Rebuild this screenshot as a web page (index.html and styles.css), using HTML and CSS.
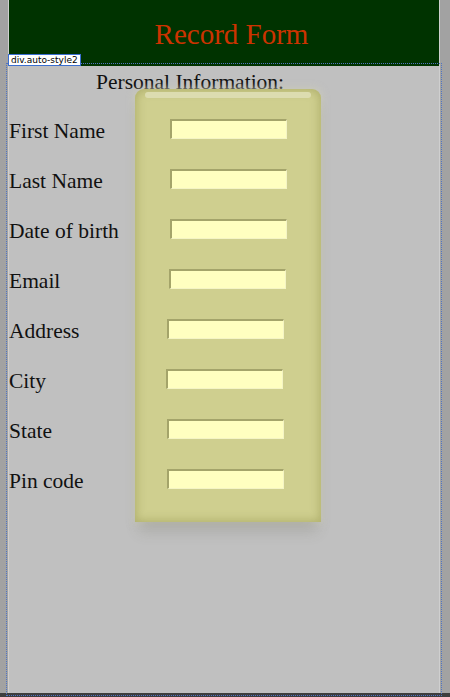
FILE: index.html
```html
<!DOCTYPE html>
<html lang="en">
<head>
    <meta charset="UTF-8">
    <meta name="viewport" content="width=device-width, initial-scale=1.0">
    <title>Record Form</title>
    <link rel="stylesheet" href="styles.css">
</head>
<body>
    <div class="page">
        <!-- Header -->
        <div class="header">
            <h1>Record Form</h1>
        </div>

        <!-- Form area (selected div in design view) -->
        <div class="auto-style2">
            <span class="tag-label">div.auto-style2</span>
            <div class="section-title">Personal Information:</div>

            <div class="form">
                <div class="labels">
                    <div class="row">First Name</div>
                    <div class="row">Last Name</div>
                    <div class="row">Date of birth</div>
                    <div class="row">Email</div>
                    <div class="row">Address</div>
                    <div class="row">City</div>
                    <div class="row">State</div>
                    <div class="row">Pin code</div>
                </div>
                <div class="panel">
                    <div class="row"><input type="text" class="field"></div>
                    <div class="row"><input type="text" class="field"></div>
                    <div class="row"><input type="text" class="field"></div>
                    <div class="row shift-1"><input type="text" class="field"></div>
                    <div class="row shift-3"><input type="text" class="field"></div>
                    <div class="row shift-4"><input type="text" class="field"></div>
                    <div class="row shift-3"><input type="text" class="field"></div>
                    <div class="row shift-3"><input type="text" class="field"></div>
                </div>
            </div>
        </div>
    </div>
    <div class="status-bar"></div>
</body>
</html>
```

FILE: styles.css
```css
html, body {
    margin: 0;
    padding: 0;
}
body {
    background-color: #a2a2a2;
    font-family: "Liberation Serif", "Times New Roman", serif;
    color: #111;
    height: 697px;
    overflow: hidden;
}
.page {
    margin-left: 8px;
    width: 430px;
    height: 693px;
    border-left: 1px solid #cfcfcf;
    border-right: 1px solid #cfcfcf;
    background-color: #c0c0c0;
    display: flex;
    flex-direction: column;
}
.header {
    background-color: #003300;
    height: 66px;
    display: flex;
    align-items: center;
    justify-content: center;
}
.header h1 {
    margin: 0;
    padding: 2px 0 0 15px;
    font-size: 29px;
    font-weight: normal;
    color: #cc3300;
}
.auto-style2 {
    position: relative;
    flex: 1;
    outline: 1px dotted #4f74c4;
    outline-offset: 2px;
}
.tag-label {
    position: absolute;
    top: -12px;
    left: -1px;
    height: 10px;
    padding: 0 2px;
    background-color: #fff;
    border: 1px solid #3b6fd0;
    font-family: "DejaVu Sans", sans-serif;
    font-size: 9px;
    line-height: 10px;
    color: #000;
}
.section-title {
    padding-left: 87px;
    margin-top: 4px;
    font-size: 21.5px;
    line-height: 24px;
}
.form {
    display: flex;
    margin-top: -5px;
}
.labels {
    width: 126px;
    padding-top: 17px;
    font-size: 21.5px;
}
.labels .row {
    height: 50px;
    line-height: 50px;
    white-space: nowrap;
}
.panel {
    position: relative;
    width: 186px;
    padding: 15px 0 18px;
    background-color: #cfcf8f;
    border-radius: 9px 9px 0 0;
    box-shadow:
        inset 0 0 9px 2px rgba(150, 150, 80, 0.5),
        0 14px 14px -4px rgba(90, 90, 70, 0.18),
        0 0 6px 2px rgba(205, 205, 185, 0.6);
}
.panel::before {
    content: "";
    position: absolute;
    top: 3px;
    left: 10px;
    right: 10px;
    height: 6px;
    border-radius: 4px;
    background-color: #dcdcb0;
}
.panel .row {
    height: 50px;
    display: flex;
    align-items: center;
    justify-content: center;
}
.panel .shift-1 { padding-right: 2px; }
.panel .shift-3 { padding-right: 6px; }
.panel .shift-4 { padding-right: 8px; }
.field {
    box-sizing: border-box;
    width: 117px;
    height: 20px;
    margin: 0 0 0 1px;
    padding: 0;
    background-color: #ffffc0;
    border-style: solid;
    border-width: 2px 1px 1px 2px;
    border-color: #a4a46a #f4f4c4 #f4f4c4 #a4a46a;
}
.status-bar {
    height: 4px;
    background-color: #3e3e3e;
}
```
